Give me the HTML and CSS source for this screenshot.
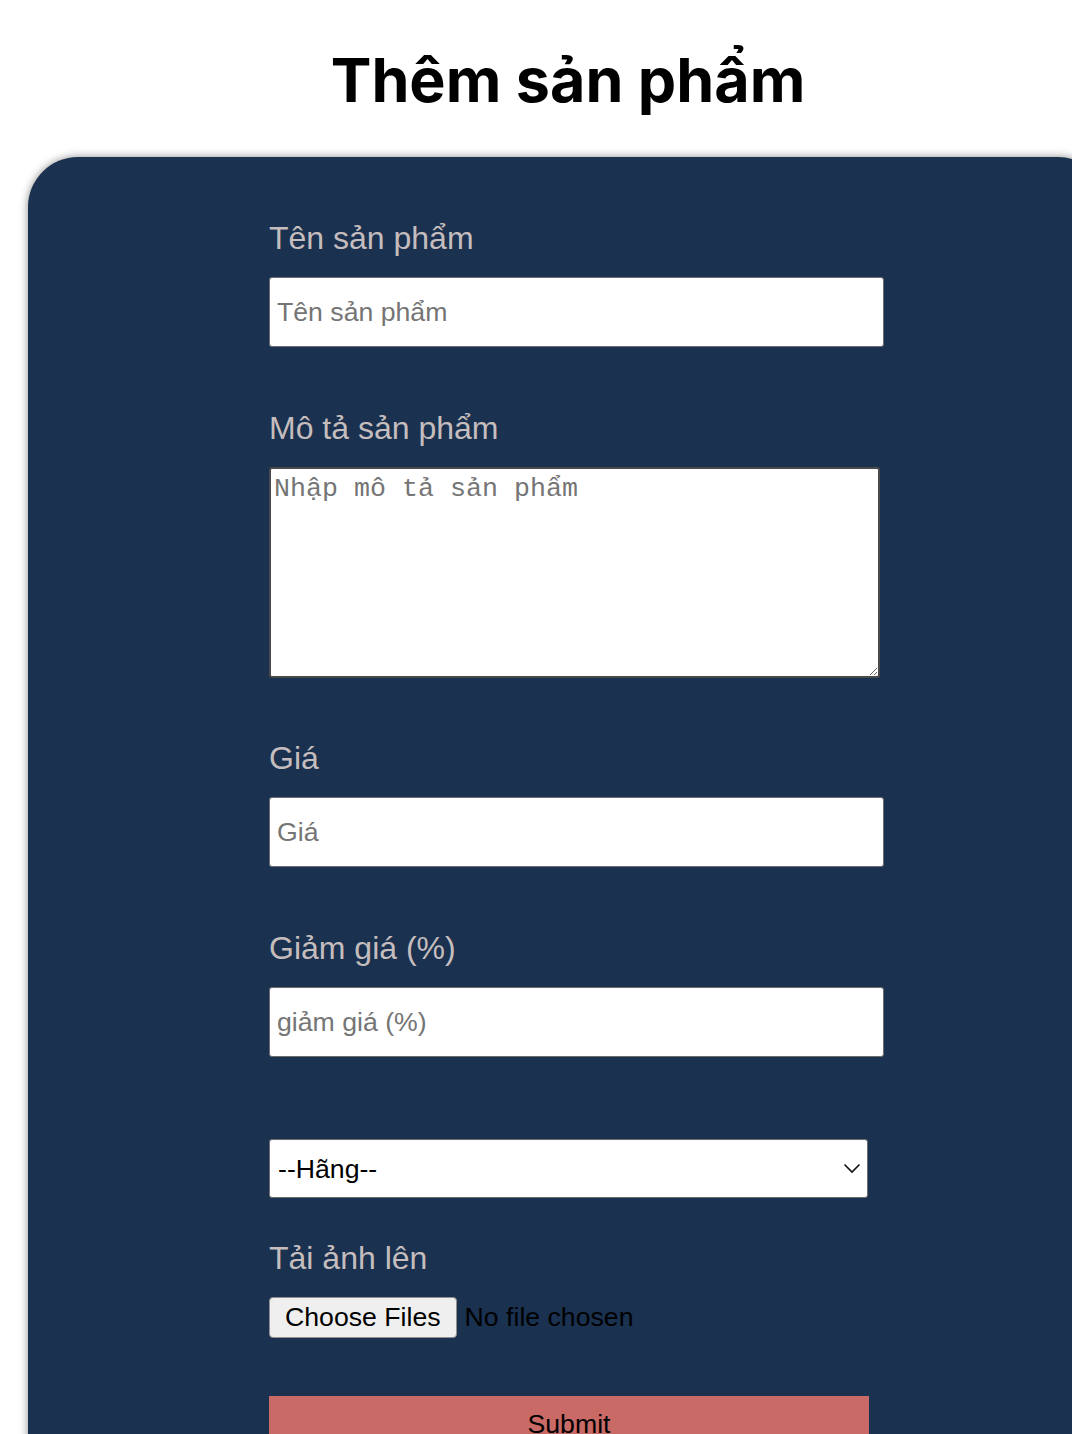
FILE: index.html
```html
<!DOCTYPE html>
<html lang="vi">
<head>
<meta charset="utf-8">
<title>Thêm sản phẩm</title>
<link rel="stylesheet" href="styles.css">
</head>
<body>
<div class="page">
  <h1 class="title">Thêm sản phẩm</h1>
  <div class="card">
    <form class="form">
      <label class="label" for="name">Tên sản phẩm</label>
      <input class="field" id="name" type="text" placeholder="Tên sản phẩm">

      <label class="label label-gap" for="desc">Mô tả sản phẩm</label>
      <textarea class="area" id="desc" placeholder="Nhập mô tả sản phẩm"></textarea>

      <label class="label label-gap-2" for="price">Giá</label>
      <input class="field" id="price" type="text" placeholder="Giá">

      <label class="label label-gap" for="sale">Giảm giá (%)</label>
      <input class="field" id="sale" type="text" placeholder="giảm giá (%)">

      <div class="select-wrap">
        <select class="select">
          <option>--Hãng--</option>
        </select>
        <svg class="chevron" width="18" height="12" viewBox="0 0 18 12" aria-hidden="true">
          <path d="M1.5 2.5 L9 10 L16.5 2.5" fill="none" stroke="#111" stroke-width="1.6"/>
        </svg>
      </div>

      <label class="label label-upload" for="files">Tải ảnh lên</label>
      <input class="file" id="files" type="file" multiple>

      <button class="submit" type="button">Submit</button>
    </form>
  </div>
</div>
</body>
</html>
```

FILE: styles.css
```css
html, body {
  margin: 0;
  padding: 0;
  background: #ffffff;
  overflow: hidden;
}

.page {
  width: 1136px;
  font-family: "Liberation Sans", Arial, sans-serif;
}

.title {
  margin: 40px 0 37px;
  font-family: Inter, "Liberation Sans", sans-serif;
  font-weight: 700;
  font-size: 61px;
  line-height: 80px;
  text-align: center;
  color: #000;
}

.card {
  margin-left: 28px;
  width: 1080px;
  min-height: 1400px;
  background: #1a3150;
  border-radius: 50px;
  box-shadow: 0 0 8px rgba(0, 0, 0, 0.45);
  padding: 63px 0 40px 241px;
  box-sizing: border-box;
}

.form {
  display: flex;
  flex-direction: column;
  align-items: flex-start;
}

.label {
  display: block;
  font-size: 32px;
  line-height: 37px;
  height: 37px;
  color: #c5bdbd;
  margin-bottom: 20px;
}

.label-gap {
  margin-top: 63px;
}

.label-gap-2 {
  margin-top: 62px;
}

.label-upload {
  margin-top: 42px;
}

.field {
  box-sizing: border-box;
  width: 615px;
  height: 70px;
  flex: 0 0 70px;
  margin: 0;
  padding: 0 7px;
  border: 1px solid #6e6e6e;
  border-radius: 3px;
  background: #fff;
  font-family: "Liberation Sans", Arial, sans-serif;
  font-size: 26.67px;
  color: #000;
}

.field::placeholder {
  color: #757575;
}

.area {
  box-sizing: border-box;
  width: 611px;
  height: 211px;
  flex: 0 0 211px;
  margin: 0;
  padding: 5px 3px;
  border: 2px solid #4a4a4a;
  border-radius: 3px;
  background: #fff;
  font-family: "Liberation Mono", "Courier New", monospace;
  font-size: 26.67px;
}

.area::placeholder {
  color: #757575;
}

.select-wrap {
  position: relative;
  margin-top: 82px;
  height: 59px;
}

.select {
  display: block;
  box-sizing: border-box;
  width: 599px;
  height: 59px;
  margin: 0;
  padding: 0 8px;
  border: 1px solid #6e6e6e;
  border-radius: 3px;
  background: #fff;
  color: #000;
  font-family: "Liberation Sans", Arial, sans-serif;
  font-size: 26.67px;
  -webkit-appearance: none;
  appearance: none;
}

.chevron {
  position: absolute;
  right: 7px;
  top: 23px;
  pointer-events: none;
}

.file {
  margin: 0;
  height: 41px;
  color: #000;
  font-family: "Liberation Sans", Arial, sans-serif;
  font-size: 26.67px;
}

.file::file-selector-button {
  height: 41px;
  margin: 0 8px 0 0;
  padding: 0 15px;
  border: 1px solid #8f8f8f;
  border-radius: 4px;
  background: #efefef;
  color: #000;
  font-family: "Liberation Sans", Arial, sans-serif;
  font-size: 26.67px;
}

.submit {
  margin-top: 58px;
  width: 600px;
  height: 56px;
  flex: 0 0 56px;
  border: none;
  background: #c96a66;
  color: #000;
  font-family: "Liberation Sans", Arial, sans-serif;
  font-size: 26.67px;
  padding: 0;
}
```
